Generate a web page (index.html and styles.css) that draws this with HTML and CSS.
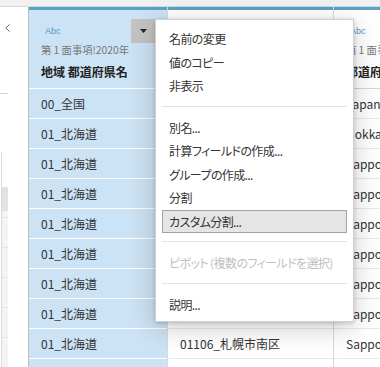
FILE: index.html
```html
<!DOCTYPE html>
<html lang="ja">
<head>
<meta charset="utf-8">
<title>Sheet</title>
<link rel="stylesheet" href="styles.css">
</head>
<body>
<div class="app">
  <div class="topbar"></div>
  <div class="main">
    <aside class="side">
      <div class="side-head">
        <svg class="chev" viewBox="0 0 5 8" width="5" height="8"><polyline points="4.5,0.5 0.8,4 4.5,7.5" fill="none" stroke="#666" stroke-width="1"/></svg>
      </div>
      <div class="side-rule"></div>
      <div class="side-list">
        <div class="side-gap"></div>
        <div class="side-thumb"></div>
        <div class="side-track">
          <div class="side-row"></div>
          <div class="side-row"></div>
          <div class="side-row"></div>
          <div class="side-row"></div>
          <div class="side-row"></div>
        </div>
      </div>
    </aside>
    <div class="sheet">
      <div class="col col-sel">
        <div class="head">
          <div class="head-text">
            <div class="type">Abc</div>
            <div class="src">第 1 面事項!2020年</div>
            <div class="name">地域 都道府県名</div>
          </div>
          <button class="drop"><svg viewBox="0 0 7 4" width="7" height="4"><polygon points="0,0 7,0 3.5,4" fill="#222"/></svg></button>
        </div>
        <div class="cell">00_全国</div>
        <div class="cell">01_北海道</div>
        <div class="cell">01_北海道</div>
        <div class="cell">01_北海道</div>
        <div class="cell">01_北海道</div>
        <div class="cell">01_北海道</div>
        <div class="cell">01_北海道</div>
        <div class="cell">01_北海道</div>
        <div class="cell">01_北海道</div>
        <div class="cell">01_北海道</div>
      </div>
      <div class="col col-plain col-2">
        <div class="head">
          <div class="head-text">
            <div class="type">Abc</div>
            <div class="src">第 1 面事項!2020年</div>
            <div class="name">地域 市区町村名</div>
          </div>
        </div>
        <div class="cell">00000_全国</div>
        <div class="cell">01000_北海道</div>
        <div class="cell">01100_札幌市</div>
        <div class="cell">01101_札幌市中央区</div>
        <div class="cell">01102_札幌市北区</div>
        <div class="cell">01103_札幌市東区</div>
        <div class="cell">01104_札幌市白石区</div>
        <div class="cell">01105_札幌市豊平区</div>
        <div class="cell">01106_札幌市南区</div>
        <div class="cell">01107_札幌市西区</div>
      </div>
      <div class="col col-plain col-3">
        <div class="head">
          <div class="head-text">
            <div class="type">Abc</div>
            <div class="src">第 1 面事項!2020年</div>
            <div class="name">都道府県名</div>
          </div>
        </div>
        <div class="cell">Japan</div>
        <div class="cell">Hokkaido</div>
        <div class="cell">Sapporo-shi</div>
        <div class="cell">Sapporo-shi</div>
        <div class="cell">Sapporo-shi</div>
        <div class="cell">Sapporo-shi</div>
        <div class="cell">Sapporo-shi</div>
        <div class="cell">Sapporo-shi</div>
        <div class="cell">Sapporo-shi</div>
        <div class="cell">Sapporo-shi</div>
      </div>
    </div>
  </div>
  <div class="menu">
    <div class="item">名前の変更</div>
    <div class="item">値のコピー</div>
    <div class="item">非表示</div>
    <div class="sep"></div>
    <div class="item">別名...</div>
    <div class="item">計算フィールドの作成...</div>
    <div class="item">グループの作成...</div>
    <div class="item">分割</div>
    <div class="item hover">カスタム分割...</div>
    <div class="sep"></div>
    <div class="item disabled">ピボット (複数のフィールドを選択)</div>
    <div class="sep"></div>
    <div class="item">説明...</div>
  </div>
</div>
</body>
</html>
```
FILE: styles.css
```css
* { box-sizing: border-box; }
html, body { margin: 0; padding: 0; }
body {
  width: 380px;
  height: 367px;
  overflow: hidden;
  background: #fff;
  font-family: "Noto Sans CJK JP", "Noto Sans", sans-serif;
  font-size: 12px;
  color: #333;
}
.app { position: relative; width: 380px; height: 367px; overflow: hidden; }
.topbar { height: 7px; background: #f1f1f1; border-bottom: 1px solid #d7d7d7; }
.main { display: flex; height: 360px; }

.side { width: 29px; flex: none; border-right: 1px solid #bdbdbd; background: #fff; }
.side-head { height: 86px; padding: 17px 0 0 5px; }
.chev { display: block; }
.side-rule { width: 8px; height: 1px; background: #d5d5d5; }
.side-list { margin-top: 58px; margin-left: 1px; width: 7px; border-left: 1px solid #dcdcdc; }
.side-gap { height: 35px; }
.side-thumb { height: 24px; background: #e2e2e2; }
.side-track { background: #f4f4f4; height: 160px; padding-top: 6px; }
.side-row { height: 30px; border-top: 1px solid #e4e4e4; }

.sheet { flex: 1; display: flex; overflow: hidden; }
.col { flex: none; display: flex; flex-direction: column; }
.col-sel { width: 138px; background: #cce3f5; }
.col-2 { width: 166px; }
.col-3 { width: 200px; }
.col-plain { border-left: 1px solid #dadada; background: #fff; }

.head {
  height: 81px;
  border-top: 3px solid #5aa2c7;
  display: flex;
  justify-content: space-between;
  align-items: flex-start;
  padding: 9px 12px 0;
  flex: none;
}
.head-text { padding-top: 6px; }
.type {
  font-family: "Liberation Sans", Arial, sans-serif;
  font-size: 9px;
  line-height: 12px;
  color: #4c9bc1;
  padding-left: 4px;
}
.src { margin-top: 6px; font-size: 10.3px; line-height: 14px; color: #777; white-space: nowrap; }
.name { margin-top: 7px; font-size: 12px; line-height: 16px; font-weight: bold; color: #222; white-space: nowrap; }

.drop {
  flex: none;
  width: 24px;
  height: 24px;
  background: #c3c3c3;
  border: 0;
  padding: 0;
  display: flex;
  align-items: center;
  justify-content: center;
}
.drop svg { display: block; }

.cell {
  flex: none;
  height: 30px;
  line-height: 29px;
  border-top: 1px solid #fff;
  padding-left: 12px;
  white-space: nowrap;
  overflow: hidden;
  color: #333;
}
.col-plain .cell { border-top-color: #e8e8e8; }
.col-plain .head + .cell { border-top-color: #d6d6d6; }

.menu {
  position: absolute;
  left: 155px;
  top: 19px;
  width: 199px;
  background: #fff;
  border: 1px solid #d0d0d0;
  padding: 7px 0 5px;
  box-shadow: 0 1px 4px rgba(0,0,0,0.18), 0 6px 26px rgba(0,0,0,0.2);
  font-feature-settings: "palt";
  letter-spacing: -0.6px;
}
.item {
  height: 23.5px;
  line-height: 21.5px;
  margin: 0 6px;
  padding-left: 6px;
  border: 1px solid transparent;
  white-space: nowrap;
  color: #333;
}
.item.hover { background: #e5e5e5; border-color: #a3a3a3; }
.item.disabled { color: #bfbfbf; }
.sep { height: 1px; background: #e2e2e2; margin: 8px 6px 9px; }
```
